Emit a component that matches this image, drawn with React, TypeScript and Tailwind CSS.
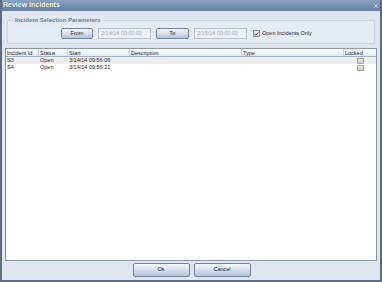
import { Check, X } from 'lucide-react';

const rows = [
  { id: 'S3', status: 'Open', start: '3/14/14 09:56:06', alt: true },
  { id: 'S4', status: 'Open', start: '3/14/14 09:56:21', alt: false },
];

function Btn({ label, w, h = 'h-[11px]' }: { label: string; w: string; h?: string }) {
  return (
    <div
      className={`${w} ${h} flex items-center justify-center rounded-[2px] border border-[#7186a3] bg-gradient-to-b from-[#f4f7fb] via-[#d6e0ec] to-[#b3c4da] text-[5.5px] text-[#1b2533]`}
    >
      {label}
    </div>
  );
}

function Field({ value }: { value: string }) {
  return (
    <div className="w-[53px] h-[11px] flex items-center px-[2px] border border-[#b7c0cc] bg-[#eef1f5] text-[5.5px] text-[#a3abb5]">
      {value}
    </div>
  );
}

export default function App() {
  return (
    <div
      className="w-[382px] h-[282px] flex flex-col bg-[#dfe6ef] border-x-2 border-b-2 border-[#5c6b80] overflow-hidden"
      style={{ fontFamily: '"Liberation Sans", Arial, sans-serif' }}
    >
      <div className="h-[11px] flex items-center justify-between px-[1px] bg-gradient-to-b from-[#8aa2c2] to-[#6580a6]">
        <span className="text-[7px] font-bold text-white [text-shadow:0_0_1px_#2c3e58]">Review Incidents</span>
        <X className="w-[6px] h-[6px] text-[#e8eef6]" strokeWidth={3} />
      </div>

      <div className="flex-1 flex flex-col px-[3px] pt-[9px] pb-[2px]">
        <div className="relative mx-[2px] h-[24px] border border-[#c9d3e0] rounded-[2px] bg-[#e5ebf3] flex items-end pb-[4px] pl-[53px] gap-[5px]">
          <span className="absolute -top-[5px] left-[5px] px-[2px] bg-[#e2e8f0] text-[6px] font-bold text-[#6a7c94]">
            Incident Selection Parameters
          </span>
          <Btn label="From" w="w-[32px]" />
          <Field value="3/14/14 00:00:00" />
          <Btn label="To" w="w-[33px]" />
          <Field value="3/15/14 00:00:00" />
          <div className="flex items-center gap-[2px] h-[11px] ml-[1px]">
            <div className="w-[7px] h-[7px] border border-[#8f958c] bg-gradient-to-b from-[#eceee6] to-[#c9ccbd] flex items-center justify-center">
              <Check className="w-[6px] h-[6px] text-[#2d3a2a]" strokeWidth={4} />
            </div>
            <span className="text-[5.5px] text-[#1b2533]">Open Incidents Only</span>
          </div>
        </div>

        <div className="mt-[4px] flex-1 border border-[#8a97a8] bg-white flex flex-col">
          <div className="h-[8px] flex text-[5.5px] text-[#1b2533] bg-gradient-to-b from-white to-[#e2e9f3] border-b border-[#9fb2ca]">
            <div className="w-[33px] pl-[1px] border-r border-[#c7d0dc]">Incident Id</div>
            <div className="w-[29px] pl-[1px] border-r border-[#c7d0dc]">Status</div>
            <div className="w-[62px] pl-[1px] border-r border-[#c7d0dc]">Start</div>
            <div className="w-[112px] pl-[1px] border-r border-[#c7d0dc]">Description</div>
            <div className="w-[102px] pl-[1px] border-r border-[#c7d0dc]">Type</div>
            <div className="flex-1 pl-[1px]">Locked</div>
          </div>
          {rows.map((r) => (
            <div
              key={r.id}
              className={`h-[7px] flex items-center text-[5.5px] text-[#1b2533] ${r.alt ? 'bg-[#eeeeee]' : 'bg-white'}`}
            >
              <div className="w-[33px] pl-[1px]">{r.id}</div>
              <div className="w-[29px] pl-[1px]">{r.status}</div>
              <div className="w-[62px] pl-[1px]">{r.start}</div>
              <div className="w-[112px]" />
              <div className="w-[102px]" />
              <div className="flex-1 flex justify-center">
                <div className="w-[7px] h-[6px] border border-[#a3a891] bg-gradient-to-b from-[#eaeade] to-[#cdd0bb]" />
              </div>
            </div>
          ))}
        </div>

        <div className="h-[17px] flex items-center justify-center gap-[4px] pl-[1px]">
          <Btn label="Ok" w="w-[57px]" h="h-[14px]" />
          <Btn label="Cancel" w="w-[57px]" h="h-[14px]" />
        </div>
      </div>
    </div>
  );
}
